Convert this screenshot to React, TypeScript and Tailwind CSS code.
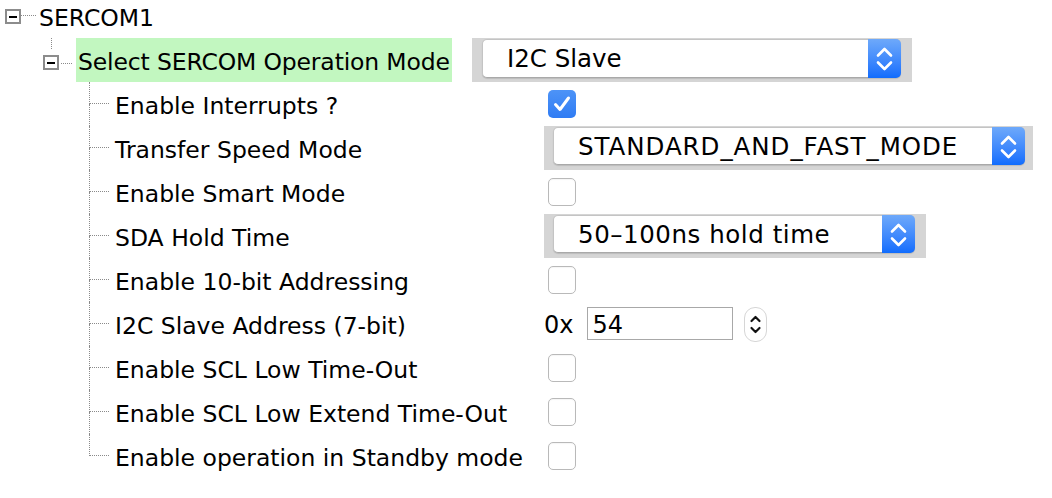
import React from "react";

const MinusBox = () => (
  <div className="w-[16px] h-[15px] border-2 border-[#8c8c8c] bg-white flex items-center justify-center shrink-0">
    <div className="w-[8px] h-[2px] bg-black" />
  </div>
);

const Checkbox = ({ checked }: { checked?: boolean }) =>
  checked ? (
    <div className="w-[28px] h-[28px] rounded-[5px] bg-gradient-to-b from-[#4d93f7] to-[#2f7cf4] flex items-center justify-center">
      <svg width="28" height="28" viewBox="0 0 28 28">
        <path d="M7.5 14.5 L12 19.5 L20.5 8" fill="none" stroke="white" strokeWidth="3" strokeLinecap="round" strokeLinejoin="round" />
      </svg>
    </div>
  ) : (
    <div className="w-[28px] h-[28px] rounded-[5px] border border-[#b9b9b9] bg-white shadow-[inset_0_1px_1px_rgba(0,0,0,0.04)]" />
  );

const Arrows = () => (
  <svg width="33" height="39" viewBox="0 0 33 39">
    <path d="M10 16.5 L16.5 10 L23 16.5" fill="none" stroke="white" strokeWidth="2.6" strokeLinecap="round" strokeLinejoin="round" />
    <path d="M10 23.5 L16.5 30 L23 23.5" fill="none" stroke="white" strokeWidth="2.6" strokeLinecap="round" strokeLinejoin="round" />
  </svg>
);

const Combo = ({ text, outer, inner, track }: { text: string; outer: string; inner: string; track: string }) => (
  <div className={`bg-[#d5d5d5] h-[44px] pt-[1px] pl-[9px] ${outer}`}>
    <div className={`h-[38px] rounded-[5px] border border-[#c4c4c4] border-b-[#a9a9a9] bg-white flex items-stretch shadow-[0_1px_1px_rgba(0,0,0,0.12)] ${inner}`}>
      <div className={`flex-1 flex items-center pl-[24px] pt-[2px] text-[24.5px] text-black leading-none whitespace-nowrap ${track}`}>{text}</div>
      <div className="w-[33px] -my-px -mr-px rounded-r-[5px] bg-gradient-to-b from-[#6ea9fa] to-[#0f6cfd] flex items-center justify-center">
        <Arrows />
      </div>
    </div>
  </div>
);

type Child = { label: string; kind: "check" | "uncheck" | "combo2" | "combo3" | "hex" };

const children: Child[] = [
  { label: "Enable Interrupts ?", kind: "check" },
  { label: "Transfer Speed Mode", kind: "combo2" },
  { label: "Enable Smart Mode", kind: "uncheck" },
  { label: "SDA Hold Time", kind: "combo3" },
  { label: "Enable 10-bit Addressing", kind: "uncheck" },
  { label: "I2C Slave Address (7-bit)", kind: "hex" },
  { label: "Enable SCL Low Time-Out", kind: "uncheck" },
  { label: "Enable SCL Low Extend Time-Out", kind: "uncheck" },
  { label: "Enable operation in Standby mode", kind: "uncheck" },
];

const Control = ({ kind }: { kind: Child["kind"] }) => {
  if (kind === "check")
    return (
      <div className="ml-[4px] self-center">
        <Checkbox checked />
      </div>
    );
  if (kind === "uncheck")
    return (
      <div className="ml-[4px] self-center">
        <Checkbox />
      </div>
    );
  if (kind === "combo2")
    return <Combo text="STANDARD_AND_FAST_MODE" outer="w-[489px]" inner="w-[472px]" track="tracking-[0.95px]" />;
  if (kind === "combo3")
    return <Combo text="50–100ns hold time" outer="w-[382px]" inner="w-[362px]" track="tracking-[0.55px]" />;
  return (
    <div className="flex items-start pt-[5px]">
      <div className="h-[33px] flex items-center pt-[3px] text-[24px] leading-none text-black">0x</div>
      <div className="ml-[14px] w-[146px] h-[33px] border border-[#a8a8a8] bg-white flex items-center pl-[4px] pt-[3px] text-[24px] leading-none text-black">
        54
      </div>
      <div className="ml-[11px] w-[23px] h-[35px] rounded-[11px] border border-[#d6d6d6] bg-white flex items-center justify-center">
        <svg width="21" height="33" viewBox="0 0 21 33">
          <path d="M6.5 13 L10.5 9 L14.5 13" fill="none" stroke="#111" strokeWidth="2.2" strokeLinecap="round" strokeLinejoin="round" />
          <path d="M6.5 20 L10.5 24 L14.5 20" fill="none" stroke="#111" strokeWidth="2.2" strokeLinecap="round" strokeLinejoin="round" />
        </svg>
      </div>
    </div>
  );
};

export default function App() {
  return (
    <div className="w-[1052px] h-[498px] bg-white overflow-hidden font-['DejaVu_Sans',sans-serif] text-black">
      {/* Row 0: SERCOM1 */}
      <div className="h-[38px] flex items-start">
        <div className="ml-[5px] mt-[9px]">
          <MinusBox />
        </div>
        <div className="mt-[15px] w-[15px] border-t border-dotted border-[#8a8a8a]" />
        <div className="ml-[3px] h-[37px] flex items-center text-[23.5px] leading-none">SERCOM1</div>
      </div>

      {/* Row 1: Select SERCOM Operation Mode */}
      <div className="h-[44px] flex items-start">
        <div className="ml-[43px] w-[16px] flex flex-col items-center">
          <div className="h-[11px] border-l border-dotted border-[#8a8a8a]" />
          <div className="mt-[6px]">
            <MinusBox />
          </div>
        </div>
        <div className="mt-[25px] ml-[2px] w-[11px] border-t border-dotted border-[#8a8a8a]" />
        <div className="ml-[4px] w-[376px] h-[44px] bg-[#c2f7c0] flex items-center pl-[2px] pt-[6px] text-[23.5px] leading-none whitespace-nowrap tracking-[-0.15px]">
          Select SERCOM Operation Mode
        </div>
        <div className="ml-[20px]">
          <div className="bg-[#d5d5d5] h-[44px] w-[440px] pt-[1px] pl-[10px]">
            <div className="h-[39px] w-[419px] rounded-[5px] border border-[#c4c4c4] border-b-[#a9a9a9] bg-white flex items-stretch shadow-[0_1px_1px_rgba(0,0,0,0.12)]">
              <div className="flex-1 flex items-center pl-[24px] pt-[2px] text-[24.5px] leading-none whitespace-nowrap">I2C Slave</div>
              <div className="w-[33px] -my-px -mr-px rounded-r-[5px] bg-gradient-to-b from-[#6ea9fa] to-[#0f6cfd] flex items-center justify-center">
                <Arrows />
              </div>
            </div>
          </div>
        </div>
      </div>

      {/* Children */}
      <div className="flex flex-col">
        {children.map((c, i) => {
          const last = i === children.length - 1;
          return (
            <div key={c.label} className="h-[44px] flex items-stretch">
              <div className="ml-[89px] w-[20px] flex flex-col">
                <div className="h-[22px] border-l border-b border-dotted border-[#8a8a8a]" />
                {last ? (
                  <div className="h-[22px]" />
                ) : (
                  <div className="h-[22px] border-l border-dotted border-[#8a8a8a]" />
                )}
              </div>
              <div className="ml-[6px] w-[429px] flex items-center pt-[5px] text-[23.5px] leading-none whitespace-nowrap">
                {c.label}
              </div>
              <Control kind={c.kind} />
            </div>
          );
        })}
      </div>
    </div>
  );
}
